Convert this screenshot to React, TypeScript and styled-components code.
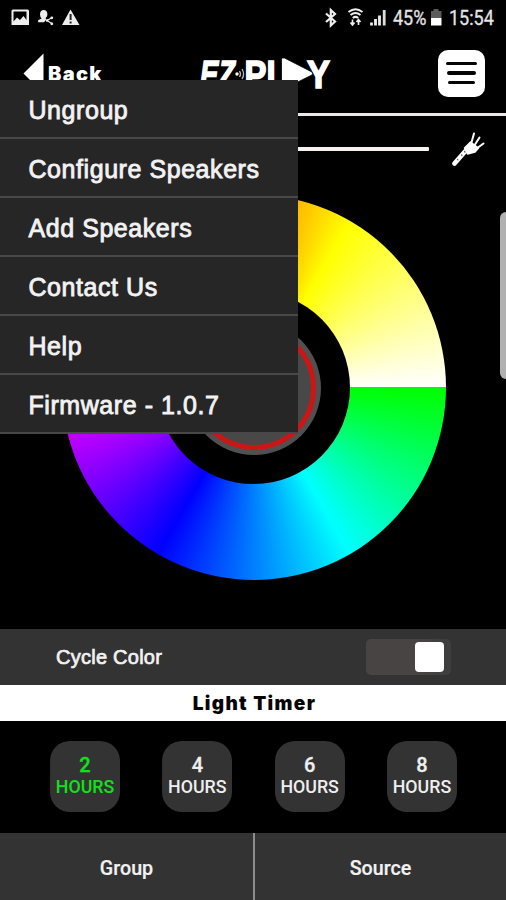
import React from "react";
import styled, { createGlobalStyle } from "styled-components";

const GlobalStyle = createGlobalStyle`
  *, *::before, *::after { box-sizing: border-box; }
  body { margin: 0; background: #000; }
`;

const Screen = styled.div`
  position: relative;
  display: flex;
  flex-direction: column;
  width: 506px;
  height: 900px;
  overflow: hidden;
  background: #000;
  color: #f2f2f2;
  font-family: "Liberation Sans", Arial, sans-serif;
`;

const StatusBar = styled.div`
  display: flex;
  flex: none;
  justify-content: space-between;
  height: 36px;
  padding: 0 11px 0 10px;
`;

const StatusText = styled.span<{ $width: number }>`
  width: ${(p) => p.$width}px;
  font: 400 20px/36px Roboto, sans-serif;
  white-space: nowrap;
  color: #e4e4e4;
  transform: scaleX(0.9);
  transform-origin: left;
  -webkit-text-stroke: 0.3px #e4e4e4;
`;

const StatusGroup = styled.div`
  display: flex;
`;

const Header = styled.header`
  display: flex;
  flex: none;
  align-items: flex-start;
  height: 77px;
`;

const BackButton = styled.div`
  display: flex;
  width: 198px;
  padding: 17px 0 0 23px;
  color: #fff;
`;

const BackLabel = styled.span`
  margin: 9px 0 0 3px;
  font-family: Inter, sans-serif;
  font-size: 20px;
  line-height: 24px;
  font-weight: 900;
  letter-spacing: 1.3px;
`;

const LogoBox = styled.div`
  width: 240px;
  padding-top: 18px;
`;

const MenuButton = styled.div`
  display: flex;
  flex-direction: column;
  align-items: center;
  justify-content: center;
  gap: 6px;
  width: 47px;
  height: 47px;
  margin-top: 14px;
  padding-bottom: 1px;
  border-radius: 10px;
  background: #fff;
`;

const MenuBar = styled.span<{ $width: number }>`
  width: ${(p) => p.$width}px;
  height: 3.6px;
  border-radius: 2px;
  background: #050505;
`;

const Rule = styled.div`
  flex: none;
  height: 3px;
  background: #ece6e8;
`;

const BrightnessRow = styled.div`
  display: flex;
  flex: none;
  align-items: center;
  gap: 20px;
  height: 66px;
  padding-left: 60px;
`;

const BrightnessTrack = styled.div`
  width: 369px;
  height: 4px;
  border-radius: 0 1px 1px 0;
  background: #f6f2f0;
`;

const WheelArea = styled.div`
  display: flex;
  flex: none;
  justify-content: center;
  height: 447px;
  padding: 13px 0 0 1px;
`;

const ColorWheel = styled.div`
  display: grid;
  place-items: center;
  width: 384px;
  height: 385px;
  border-radius: 50%;
  background: conic-gradient(
    from 90deg,
    #00ff00 0deg,
    #00ffff 60deg,
    #0000ff 120deg,
    #ff00ff 180deg,
    #ff0000 240deg,
    #ffff00 300deg,
    #ffffff 360deg
  );
`;

const WheelHole = styled.div`
  display: grid;
  place-items: center;
  width: 193px;
  height: 193px;
  border-radius: 50%;
  background: #000;
`;

const Knob = styled.div`
  display: grid;
  place-items: center;
  width: 134px;
  height: 134px;
  border-radius: 50%;
  background: #505050;
`;

const KnobRing = styled.div`
  width: 124px;
  height: 124px;
  border: 5px solid #cc1616;
  border-radius: 50%;
  background: #484848;
`;

const CycleRow = styled.div`
  display: flex;
  flex: none;
  align-items: center;
  justify-content: space-between;
  height: 56px;
  padding: 1px 55px 0 56px;
  background: #333;
  font-size: 20px;
  letter-spacing: 0.25px;
  -webkit-text-stroke: 0.7px #f2f2f2;
`;

const Toggle = styled.div`
  display: flex;
  justify-content: flex-end;
  width: 85px;
  height: 36px;
  margin-bottom: 1px;
  padding: 3px 7px;
  border-radius: 5px;
  background: linear-gradient(90deg, #484444 60%, #3e3e3e);
`;

const ToggleThumb = styled.div`
  width: 29px;
  height: 30px;
  border-radius: 4px;
  background: #fff;
`;

const TimerTitle = styled.div`
  flex: none;
  height: 36px;
  padding-left: 3px;
  background: #fff;
  color: #050505;
  font-family: Inter, sans-serif;
  font-size: 19px;
  font-weight: 900;
  line-height: 38px;
  letter-spacing: 1.35px;
  text-align: center;
`;

const TimerRow = styled.div`
  display: flex;
  flex: none;
  align-items: flex-start;
  justify-content: space-between;
  height: 112px;
  padding: 20px 49px 0 50px;
`;

const TimerButton = styled.div<{ $active: boolean }>`
  width: 70px;
  height: 71px;
  padding-top: 13px;
  border-radius: 20px;
  background: #333;
  color: ${(p) => (p.$active ? "#12e21b" : "#efefef")};
  font: 500 17.8px/22px Roboto, sans-serif;
  text-align: center;
`;

const TimerCount = styled.div`
  font-size: 20px;
  -webkit-text-stroke: 0.3px currentColor;
`;

const Tabs = styled.nav`
  display: grid;
  flex: 1;
  grid-template-columns: 255px 251px;
  background: #333;
`;

const Tab = styled.div`
  padding-top: 1px;
  border-right: 2px solid #8c8c8c;
  font: 500 19.7px/69px Roboto, sans-serif;
  text-align: center;
  -webkit-text-stroke: 0.2px #f2f2f2;

  &:last-child { border: 0; }
`;

const Drawer = styled.div`
  position: absolute;
  top: 80px;
  left: 0;
  width: 298px;
  background: #262626;
`;

const DrawerItem = styled.div`
  height: 59px;
  padding-left: 28.5px;
  border-bottom: 2px solid #484848;
  color: #f2f2f2;
  font-size: 25px;
  line-height: 60px;
  letter-spacing: 0.56px;
  white-space: nowrap;
  -webkit-text-stroke: 0.85px #f2f2f2;
`;

const EdgeHandle = styled.div`
  position: absolute;
  top: 212px;
  right: 0;
  width: 6px;
  height: 167px;
  border-radius: 6px 0 0 6px;
  background: #b0b0b0;
`;

const drawerItems = ["Ungroup", "Configure Speakers", "Add Speakers", "Contact Us", "Help", "Firmware - 1.0.7"];
const timers = [2, 4, 6, 8];

function NotificationIcons() {
  return (
    <svg width="72" height="36" viewBox="10 0 72 36" fill="#eee">
      <path fillRule="evenodd" d="M13 9.5h14.500q1.500 0 1.500 1.500v14H11.500V11q0-1.500 1.500-1.500Zm.5 2v10l3.500-4 3 2.500 3.500-4 3 4V11.500Z" />
      <path d="M40 14.500q0-4.500 3.700-4.500t3.700 4.500q0 2-1.800 3.500l.5 1.500-2 2.800h-6v-2l3.500-1.700Q40 17 40 14.500Z" />
      <g stroke="#eee" strokeWidth="1.200"><path d="M51.800 17.800 47 20.500l4.800 3" fill="none" /><circle cx="51.800" cy="17.800" r=".8" /><circle cx="47" cy="20.500" r=".7" /><circle cx="51.800" cy="23.800" r=".8" /></g>
      <path d="M70.500 9.500 79.500 25H62Z" />
      <path d="M70.600 14v6M70.600 21.500v2" stroke="#222" strokeWidth="2" />
    </svg>
  );
}

function ConnectivityIcons() {
  return (
    <svg width="72" height="36" viewBox="321 0 72 36" fill="none" stroke="#eee">
      <path d="m326 13.500 9 8-4.200 4V10l4.200 4-9 8" strokeWidth="2.200" />
      <path d="M348.500 12q7-5.500 14 0M350.500 15q5-4 10 0M352.800 18q2.700-2.200 5.400 0" strokeWidth="2" />
      <path d="M352.500 19.500V25M358.500 25v-5.500M350.500 22.500l2 2.500 2-2.500M356.500 22l2-2.500 2 2.500" strokeWidth="1.600" />
      <path d="M371.500 25.500v-3M375.500 25.500V19M379.500 25.500V15.500" strokeWidth="2.800" />
      <path d="M384.200 25.500V10" strokeWidth="2.800" stroke="#ddd" />
    </svg>
  );
}

function BatteryIcon() {
  return (
    <svg width="24" height="36" viewBox="425 0 24 36">
      <path d="M431 11h2.500V9h5v2h3v7H431Z" fill="#5c5c5c" />
      <path d="M431 18h10.500v7.500H431Z" fill="#fff" />
    </svg>
  );
}

function Logo() {
  return (
    <svg width="140" height="40" viewBox="198 54 140 40" fill="#fff">
      <g fontFamily="Liberation Sans, Arial, sans-serif" fontWeight="700" stroke="#fff" strokeWidth="1.600">
        <text x="200" y="87.500" fontSize="39" fontStyle="italic" textLength="35" lengthAdjust="spacingAndGlyphs">EZ</text>
        <text x="244.500" y="87.500" fontSize="39" textLength="42" lengthAdjust="spacingAndGlyphs">PL</text>
        <text x="307" y="87.500" fontSize="39" textLength="23" lengthAdjust="spacingAndGlyphs">Y</text>
      </g>
      <path d="M281.500 58v32L312 75q1.200-1.500 0-3L284.500 58Z" stroke="#000" strokeWidth=".8" />
      <circle cx="237" cy="74" r="1.700" />
      <path d="M239.500 71q2 3 0 6M242 69q3.200 5 0 10" fill="none" stroke="#bbb" strokeWidth="1.300" />
    </svg>
  );
}

function FlashlightIcon() {
  return (
    <svg width="38" height="38" viewBox="448 130 38 38" fill="none" stroke="#fff" strokeLinecap="round">
      <path d="M453.500 163.500 464 151.500" strokeWidth="4.800" />
      <path d="M463.500 148 469.500 142l8 6-3.500 4-7.500 2Z" fill="#fff" strokeWidth="1.500" strokeLinejoin="round" />
      <path d="M470.500 142.500 473 133.500M474 144.500l4.500-7M477 147.500l5.500-4" strokeWidth="2" />
      <path d="m460.500 155 .5.600M463.500 151.500l.5.500M456.500 159.500l.4.400" stroke="#666" strokeWidth="1.300" />
    </svg>
  );
}

export default function App() {
  return (
    <>
      <GlobalStyle />
      <Screen>
        <StatusBar>
          <NotificationIcons />
          <StatusGroup>
            <ConnectivityIcons />
            <StatusText $width={32}>45%</StatusText>
            <BatteryIcon />
            <StatusText $width={46}>15:54</StatusText>
          </StatusGroup>
        </StatusBar>
        <Header>
          <BackButton>
            <svg width="22" height="42" viewBox="0 0 22 42" fill="#fff"><path d="M20.500 0.500v40L0.500 20.500Z" /></svg>
            <BackLabel>Back</BackLabel>
          </BackButton>
          <LogoBox><Logo /></LogoBox>
          <MenuButton>
            <MenuBar $width={31} />
            <MenuBar $width={29} />
            <MenuBar $width={27} />
          </MenuButton>
        </Header>
        <Rule />
        <BrightnessRow>
          <BrightnessTrack />
          <FlashlightIcon />
        </BrightnessRow>
        <WheelArea>
          <ColorWheel>
            <WheelHole>
              <Knob><KnobRing /></Knob>
            </WheelHole>
          </ColorWheel>
        </WheelArea>
        <CycleRow>
          Cycle Color
          <Toggle><ToggleThumb /></Toggle>
        </CycleRow>
        <TimerTitle>Light Timer</TimerTitle>
        <TimerRow>
          {timers.map((hours) => (
            <TimerButton key={hours} $active={hours === 2}>
              <TimerCount>{hours}</TimerCount>
              HOURS
            </TimerButton>
          ))}
        </TimerRow>
        <Tabs>
          <Tab>Group</Tab>
          <Tab>Source</Tab>
        </Tabs>
        <EdgeHandle />
        <Drawer>
          {drawerItems.map((item) => <DrawerItem key={item}>{item}</DrawerItem>)}
        </Drawer>
      </Screen>
    </>
  );
}
